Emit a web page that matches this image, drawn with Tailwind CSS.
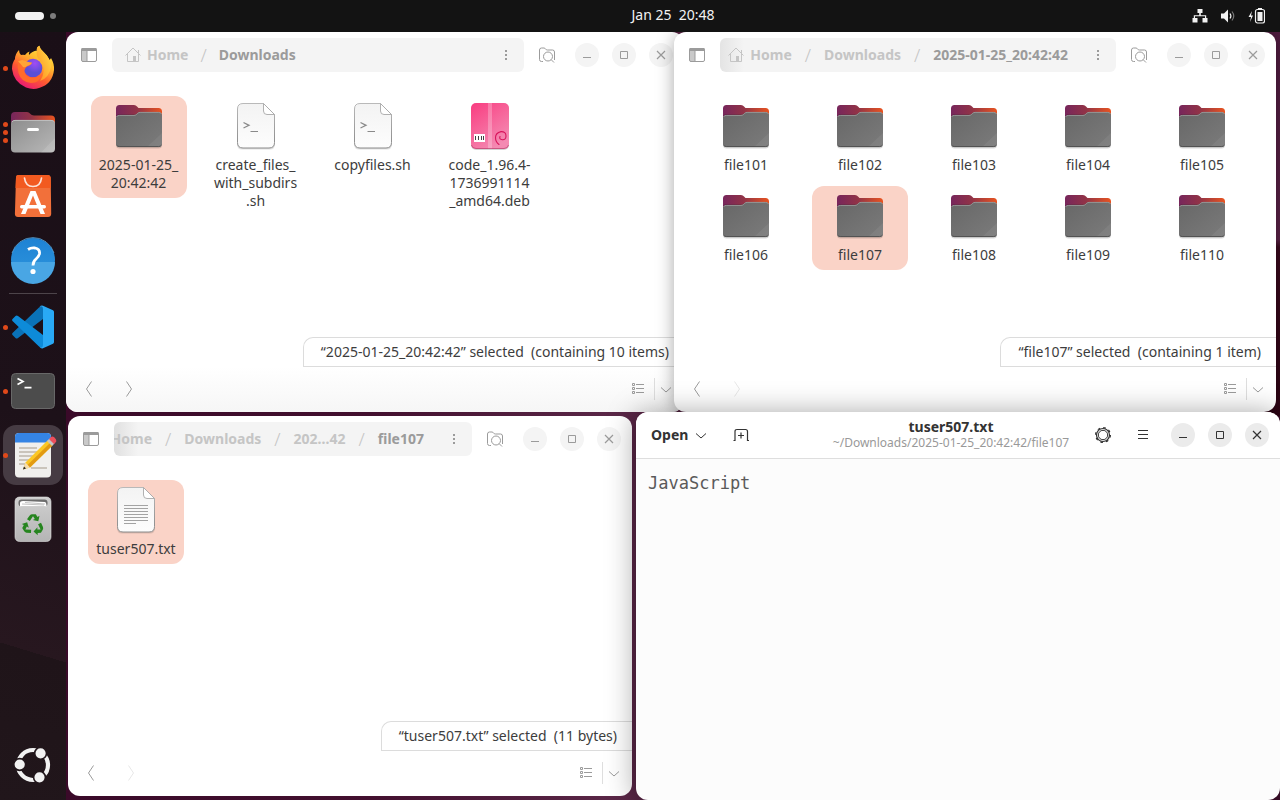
<!DOCTYPE html>
<html lang="en">
<head>
<meta charset="utf-8">
<meta name="viewport" content="width=device-width, initial-scale=1">
<title>Ubuntu Desktop</title>
<script src="https://cdn.jsdelivr.net/npm/@tailwindcss/browser@4"></script>
</head>
<body class="flex h-screen flex-col overflow-hidden bg-[#3a0a29] font-['Noto_Sans',sans-serif] text-sm leading-[18px] text-[#3d3d3d]">

<!-- Shared symbols -->
<svg width="0" height="0" class="absolute" aria-hidden="true">
  <defs>
    <linearGradient id="fold-back" x1="0" y1="0" x2="1" y2="0"><stop offset="0" stop-color="#77265c"/><stop offset=".45" stop-color="#913347"/><stop offset="1" stop-color="#e95420"/></linearGradient>
    <linearGradient id="fold-front" x1="0" y1="0" x2="1" y2="1"><stop offset="0" stop-color="#676767"/><stop offset="1" stop-color="#7b7b7b"/></linearGradient>
    <linearGradient id="paper" x1="0" y1="0" x2="0" y2="1"><stop offset="0" stop-color="#f3f3f3"/><stop offset="1" stop-color="#fdfdfd"/></linearGradient>
    <linearGradient id="paper-edge" x1="0" y1="0" x2="0" y2="1"><stop offset="0" stop-color="#b9b9b9"/><stop offset="1" stop-color="#8a8a8a"/></linearGradient>
    <linearGradient id="deb" x1="0" y1="0" x2=".6" y2="1"><stop offset="0" stop-color="#f93c80"/><stop offset="1" stop-color="#f48ab2"/></linearGradient>
  </defs>
  <symbol id="folder" viewBox="0 0 48 48">
    <path d="M1 44V6.500Q1 3 4.500 3H19q2 0 3 1.500L23.500 6H43.500Q47 6 47 9.500V20L1 30Z" fill="url(#fold-back)"/>
    <rect x="1" y="12" width="46" height="34.500" rx="3.500" fill="#000" opacity=".16"/>
    <path d="M1 16.500Q1 13 4.500 13H19q1.500 0 2.500-1l1-1Q23.500 10 25 10H43.500Q47 10 47 13.500V41.500Q47 45 43.500 45H4.500Q1 45 1 41.500Z" fill="url(#fold-front)"/>
    <path d="M1.500 15Q2 13.400 4.500 13.400H19q1.600 0 2.600-1l1-1q1-1 2.500-1H43.500Q46 10.400 46.500 12" fill="none" stroke="#a0a0a0" stroke-width=".8"/>
    <path d="M47 31V41.500Q47 45 43.500 45H32Z" fill="#fff" opacity=".06"/>
    <path d="M1.500 43Q2.500 44.600 4.500 44.600H43.500Q45.500 44.600 46.500 43" fill="none" stroke="#4c4c4c" stroke-width=".9"/>
  </symbol>
  <symbol id="page" viewBox="0 0 48 48">
    <path d="M11 2.500H32L43 13V42Q43 47.500 38 47.500H10Q5 47.500 5 42V8Z" fill="#000" opacity=".12"/>
    <path d="M11 1.500H31.500L42.500 12.500V40.500Q42.500 46 37 46H11Q5.500 46 5.500 40.500V7Q5.500 1.500 11 1.500Z" fill="url(#paper)" stroke="url(#paper-edge)" stroke-width="1"/>
    <path d="M31.500 1.500V9Q31.500 12.500 35 12.500H42.500Z" fill="#fff" stroke="#a8a8a8" stroke-width=".9" stroke-linejoin="round"/>
  </symbol>
  <symbol id="script" viewBox="0 0 48 48">
    <use href="#page" width="48" height="48"/>
    <path d="M11.500 20.500L17 23.300L11.500 26" fill="none" stroke="#8a8a8a" stroke-width="1.300"/><path d="M18.500 29.500H26" stroke="#8a8a8a"/>
  </symbol>
  <symbol id="textdoc" viewBox="0 0 48 48">
    <use href="#page" width="48" height="48"/>
    <path d="M12 19.500H36M12 22.500H36M12 25.500H36M12 28.500H36M12 31.500H36M12 34.500H36M12 37.500H24" stroke="#999" stroke-width=".9"/>
  </symbol>
  <symbol id="package" viewBox="0 0 48 48">
    <rect x="5" y="2" width="38" height="46" rx="5" fill="#000" opacity=".17"/>
    <rect x="5" y="1" width="38" height="46" rx="5" fill="url(#deb)"/>
    <path d="M22 1h4v46h-4z" fill="#fff" opacity=".25"/>
    <path d="M5.500 43Q6 46.500 10 46.500H38Q42 46.500 42.500 43" fill="none" stroke="#b9406f" stroke-width=".7"/>
    <path d="M8 32h11v8H8z" fill="#fff"/><path d="M9.500 34v4M12.500 34v4M15.500 34v4M17.500 34v4" stroke="#444" stroke-width="1"/>
    <path d="M33 42.500Q29.500 40 29.500 35.500T35 29.600Q40 29.500 40 34T35.500 37.500Q33 37 34 34.500" fill="none" stroke="#d7165c" stroke-width="1.100" stroke-linecap="round"/>
  </symbol>
  <symbol id="sidebar" viewBox="0 0 16 16">
    <path d="M1 2h5v13H1z" fill="#c9c9c9"/><rect x=".5" y="1.500" width="15" height="13" rx="1.500" fill="none" stroke="currentColor"/><path d="M.5 1h15v3H.5zM5.500 3h1v12h-1z" fill="currentColor"/>
  </symbol>
  <symbol id="home" viewBox="0 0 16 16">
    <path d="M.5 8.500L8 1L15.500 8.500M2.500 7V14.500H13.500V7M13.500 6V3" fill="none" stroke="currentColor"/><path d="M8 9h3v5.500H8z" fill="currentColor"/>
  </symbol>
  <symbol id="search" viewBox="0 0 16 16">
    <path d="M4 14.500H2.500Q.5 14.500.5 12.500V3Q.5 1 2.500 1H5Q6 1 6.500 2T8.500 3H13.500Q15.500 3 15.500 5V13" fill="none" stroke="currentColor"/><circle cx="9" cy="9.500" r="4.500" fill="none" stroke="currentColor"/><path d="M12.200 12.700L15 15.500" stroke="currentColor"/>
  </symbol>
  <symbol id="dots" viewBox="0 0 16 16"><path d="M7 3h2v2H7zM7 7h2v2H7zM7 11h2v2H7z" fill="currentColor"/></symbol>
  <symbol id="min" viewBox="0 0 24 24"><path d="M8 14h8v1H8z" fill="currentColor"/></symbol>
  <symbol id="max" viewBox="0 0 24 24"><path d="M8.500 8.500h7v7h-7z" fill="none" stroke="currentColor"/></symbol>
  <symbol id="close" viewBox="0 0 24 24"><path d="M8 8l8 8M16 8l-8 8" stroke="currentColor" stroke-width="1.200"/></symbol>
  <symbol id="prev" viewBox="0 0 16 16"><path d="M10.500.5L5.500 8L10.500 15.500" fill="none" stroke="currentColor"/></symbol>
  <symbol id="next" viewBox="0 0 16 16"><path d="M5.500.5L10.500 8L5.500 15.500" fill="none" stroke="currentColor"/></symbol>
  <symbol id="list" viewBox="0 0 16 16"><path d="M2.500 2.500h2v2h-2zM2.500 6.500h2v2h-2zM2.500 10.500h2v2h-2zM6 3.500h8M6 7.500h8M6 11.500h8" fill="none" stroke="currentColor"/></symbol>
  <symbol id="down" viewBox="0 0 12 12"><path d="M1 4.500L6 9L11 4.500" fill="none" stroke="currentColor"/></symbol>
</svg>

<!-- Top bar -->
<header class="grid h-8 shrink-0 grid-cols-[66px_1fr_auto_1fr] items-center bg-[#131313] text-[#f2f2f2]">
  <button aria-label="Activities" class="flex items-center gap-1.5 justify-self-start pl-[15px]">
    <span class="h-2 w-[29px] rounded-full bg-[#f2f2f2]"></span><span class="size-1.5 rounded-full bg-[#7d7d7d]"></span>
  </button>
  <button class="col-start-3 whitespace-pre pb-0.5">Jan 25  20:48</button>
  <button aria-label="System menu" class="flex items-center gap-3 justify-self-end pr-[15px]">
    <svg class="size-4" viewBox="0 0 16 16" fill="currentColor"><path d="M5.500 1h5v4H8.800v2.300h5.400V10H15.500v4.500h-5V10h2.500V8.300h-10V10h2.500v4.500H.5V10h1.300V7.300H7.200V5H5.500z"/></svg>
    <svg class="size-4" viewBox="0 0 16 16"><path d="M1 5.500h3L8 1.500v13L4 10.500H1z" fill="currentColor"/><path d="M10 5.500Q11.800 8 10 10.500" fill="none" stroke="currentColor" stroke-width="1.200"/><path d="M12 3.500Q15.500 8 12 12.500" fill="none" stroke="#777" stroke-width="1.200"/></svg>
    <svg class="h-4 w-[17px]" viewBox="0 0 17 16"><path d="M4 3L.5 9H3l-1 5L5 7.500H3z" fill="currentColor"/><rect x="7.500" y="1.500" width="9" height="13.500" rx="2" fill="none" stroke="currentColor" stroke-width="1.200"/><path d="M9.500 4h5v9h-5zM10 0h4v1.500h-4z" fill="currentColor"/></svg>
  </button>
</header>

<div class="flex min-h-0 flex-1">

  <!-- Dock -->
  <nav aria-label="Dock" class="flex w-[66px] shrink-0 flex-col bg-[linear-gradient(197deg,#1a0f17_0%,#1d1119_50%,#27171f_80%,#1f1419_80%,#21161b_100%)] pt-1">
    <button aria-label="Firefox" class="relative flex h-16 items-center justify-center">
      <span class="absolute left-[3px] size-[5px] rounded-full bg-[#e0491a]"></span>
      <svg class="size-12" viewBox="0 0 48 48">
        <defs><linearGradient id="ff1" x1=".85" y1="0" x2=".25" y2="1"><stop offset="0" stop-color="#fff04a"/><stop offset=".35" stop-color="#ffb92e"/><stop offset=".65" stop-color="#ff5a30"/><stop offset="1" stop-color="#e6127c"/></linearGradient><radialGradient id="ff2" cx=".6" cy=".25"><stop offset="0" stop-color="#a24bf5"/><stop offset="1" stop-color="#5a4fd6"/></radialGradient><linearGradient id="ff3" x1="1" y1="0" x2="0" y2="1"><stop offset="0" stop-color="#ffe14a"/><stop offset="1" stop-color="#ff8a1e"/></linearGradient></defs>
        <path d="M10 6Q10 9 12 11Q14 10.500 16 11Q18 8 20.500 7.500Q19.500 9.500 20 11Q23 7 28 6.500Q27 3.500 30.300 1.700Q31 5.500 35 8.500Q39 12 40.500 16Q42 14.500 42 14Q45.500 20 45 26Q43.500 40 30 44Q24 46 17 43.500Q4.500 38 3 25Q3 19 6 15Q6 10 10 6Z" fill="url(#ff1)"/>
        <path d="M30.300 1.700Q31 5.500 35 8.500Q41.500 14 42 23Q40 34 31 37Q38 27 32 18Q26 12 28 6.500Q27 3.500 30.300 1.700Z" fill="url(#ff3)"/>
        <circle cx="24" cy="24" r="9.300" fill="url(#ff2)"/>
        <path d="M9 17.500Q14 15 18 18L23 18.800Q22.500 21 18 22.500Q15 25 15.500 28Q17 33 23 33.500Q30 33.500 34 29Q31 39 22 39Q12 38 9.500 29Q8 23 9 17.500Z" fill="#ff6b2b"/>
        <path d="M9 17.500Q13 14.500 18 17.500Q20 18.500 23 18.800Q22 21 18 22Q16 24 14 23Q11 19 9 17.500Z" fill="#ffa436"/>
      </svg>
    </button>
    <button aria-label="Files" class="relative flex h-16 items-center justify-center">
      <span class="absolute left-[3px] flex flex-col gap-[3px]"><span class="size-[5px] rounded-full bg-[#e0491a]"></span><span class="size-[5px] rounded-full bg-[#e0491a]"></span><span class="size-[5px] rounded-full bg-[#e0491a]"></span></span>
      <svg class="size-12" viewBox="0 0 48 48">
        <defs><linearGradient id="fl" x1="0" y1="0" x2="1" y2="1"><stop offset="0" stop-color="#8d8d8d"/><stop offset="1" stop-color="#b8b8b8"/></linearGradient></defs>
        <path d="M2 30V8Q2 4 6 4H18q2 0 3.200 1.700T25 7.500H42Q46 7.500 46 11.500V30Z" fill="url(#fold-back)"/>
        <rect x="2" y="12" width="44" height="32.500" rx="4" fill="url(#fl)"/><path d="M3 14Q4 12.400 6 12.400H42Q44.500 12.400 45.500 14" fill="none" stroke="#c9c9c9" stroke-width=".8"/><path d="M46 30V40.500Q46 44.500 42 44.500H32Z" fill="#fff" opacity=".12"/>
        <rect x="18" y="20" width="12" height="3" rx="1.500" fill="#fff"/>
      </svg>
    </button>
    <button aria-label="App Center" class="flex h-16 items-center justify-center">
      <svg class="size-12" viewBox="0 0 48 48">
        <path d="M9 3H39Q41.500 3 41.700 5.500L42.200 42Q42 45 39 45H9Q6 45 5.900 42L7 5.500Q7 3 9 3Z" fill="#f2703a"/>
        <path d="M9 3H39Q41.500 3 41.700 5.500L41.900 16H6.500L7 5.500Q7 3 9 3Z" fill="#f25a20"/>
        <path d="M15.500 6Q16.500 14.500 24 14.500T32.500 6" fill="none" stroke="#fbe3d8" stroke-width="1.700" stroke-linecap="round"/>
        <path d="M21.500 19H26.500L36 42H31.500L24 23.500L16.500 42H12Z" fill="#fff"/><rect x="11" y="33" width="26" height="3.500" rx="1.700" fill="#fff"/>
      </svg>
    </button>
    <button aria-label="Help" class="flex h-16 items-center justify-center">
      <svg class="size-12" viewBox="0 0 48 48">
        <defs><linearGradient id="hp" x1="0" y1="0" x2="0" y2="1"><stop offset="0" stop-color="#1e82d4"/><stop offset="1" stop-color="#2f97dd"/></linearGradient></defs>
        <circle cx="24" cy="24" r="22" fill="url(#hp)"/><path d="M2 26H46A22 22 0 0 1 2 26Z" fill="#49a6e4"/><path d="M3 17A22 22 0 0 1 45 17" fill="none" stroke="#63b3ea" stroke-width=".7"/>
        <path d="M19 13.500Q22 11.500 26 12Q31 13 30.500 17.500Q30 20.500 27 23Q24 25.500 24 29.500" fill="none" stroke="#fff" stroke-width="2.800"/><circle cx="24" cy="35.500" r="2.600" fill="#fff"/>
      </svg>
    </button>
    <div class="flex h-[3px] items-center px-[9px]"><span class="h-px w-full bg-[#4d444a]"></span></div>
    <button aria-label="Visual Studio Code" class="relative flex h-16 items-center justify-center">
      <span class="absolute left-[3px] size-[5px] rounded-full bg-[#e0491a]"></span>
      <svg class="size-12" viewBox="0 0 48 48">
        <path d="M3.500 30Q2.500 31 3.500 32L6.500 35Q7.500 36 9 35L34 16V3Q31.500 3 30 4.500Z" fill="#0a72b8"/>
        <path d="M3.500 18Q2.500 17 3.500 16L6.500 13Q7.500 12 9 13L34 32V45Q31.500 45 30 43.500Z" fill="#0d8bd9"/>
        <path d="M34 2.700L44 7.300Q45 7.800 45 9V39Q45 40.200 44 40.700L34 45.300Q32 46 30.500 44Q34 45.500 34 42V6Q34 2.500 30.500 4Q32 2 34 2.700Z" fill="#29a9f5"/>
      </svg>
    </button>
    <button aria-label="Terminal" class="relative flex h-16 items-center justify-center">
      <span class="absolute left-[3px] size-[5px] rounded-full bg-[#e0491a]"></span>
      <svg class="size-12" viewBox="0 0 48 48"><rect x="2.500" y="6.500" width="43" height="35" rx="4" fill="#4c4c4c" stroke="#686868"/><path d="M8.500 11.500L14 14.500L8.500 17.500M15.500 20.700H22.500" fill="none" stroke="#fff" stroke-width="1.700"/></svg>
    </button>
    <button aria-label="Text Editor" class="relative flex h-16 items-center justify-center">
      <span class="absolute left-[3px] size-[60px] rounded-[13px] bg-[#463b43]"></span>
      <span class="absolute left-[3px] size-[5px] rounded-full bg-[#e0491a]"></span>
      <svg class="relative size-12" viewBox="0 0 48 48">
        <rect x="6" y="2" width="36" height="44.500" rx="4" fill="#f0efed"/><path d="M6 11.500V6Q6 2 10 2H38Q42 2 42 6V11.500Z" fill="#3584e4"/>
        <path d="M10 17H28M10 21H30M10 25H26M10 29H22M10 33H18M22 37H38" stroke="#bdb7ab" stroke-width="1.600"/>
        <path d="M14 38.500L16.500 31.500L38.500 9.500L43.500 14.500L21 36.500Z" fill="#fbc725"/><path d="M18.500 34L41 12L43.500 14.500L21 36.500Z" fill="#e29a12"/><path d="M14 38.500L16.500 31.500L21 36.500Z" fill="#f4dcae"/><path d="M14 38.500L15 35.500L17 37.500Z" fill="#222"/>
        <path d="M38 10L40.500 7.500L45.500 12.500L43 15Z" fill="#c4c4c4"/><path d="M40 8L42 6Q43.500 5 45.500 6.500L47 8.500Q48 10.500 46.500 11.500L45 13Z" fill="#ee4f5c"/>
      </svg>
    </button>
    <button aria-label="Trash" class="flex h-16 items-center justify-center">
      <svg class="size-12" viewBox="0 0 48 48">
        <defs><linearGradient id="tr" x1="0" y1="0" x2="0" y2="1"><stop offset="0" stop-color="#cfcfcf"/><stop offset="1" stop-color="#b5b5b5"/></linearGradient><path id="rc" d="M18 24.200L20.700 20.400Q21.700 19.200 23.200 19.200H26.800L28.500 22L30.500 20.800L29.300 26.300L23.800 25L25.800 23.900L24 21.200L20.800 26Z"/></defs>
        <rect x="6" y="2" width="36" height="44.500" rx="4.500" fill="url(#tr)" stroke="#e0e0e0" stroke-width=".6"/><rect x="9.500" y="4.500" width="29" height="7" rx="3" fill="#6d6d6d"/>
        <path d="M11 11.500V8Q11 6 14 6L36 7Q37.500 7.500 37.500 11.500Z" fill="#fff"/><path d="M13 9L35 10M16 7.500L36 9" stroke="#999" stroke-width=".6"/>
        <g fill="#26851f"><use href="#rc"/><use href="#rc" transform="rotate(120 24 30)"/><use href="#rc" transform="rotate(240 24 30)"/></g>
      </svg>
    </button>
    <button aria-label="Show Apps" class="mt-auto flex h-[71px] items-center justify-center">
      <svg class="size-12" viewBox="0 0 48 48"><circle cx="24" cy="24" r="15" fill="none" stroke="#f2f2f2" stroke-width="4.200"/><g fill="#f2f2f2" stroke="#21161b" stroke-width="1.600"><circle cx="10.700" cy="23.500" r="5.900"/><circle cx="31.600" cy="12.300" r="5.900"/><circle cx="30.500" cy="36.300" r="5.900"/></g></svg>
    </button>
  </nav>

  <!-- Desktop -->
  <main class="relative min-w-0 flex-1 overflow-hidden bg-[linear-gradient(90deg,#3a0a29_0%,#43102f_25%,#5a2747_45%,#52203f_55%,#4d1a3b_90%,#3d0e2a_100%)]">
    <div class="absolute right-0 top-0 h-1/2 w-4 bg-[linear-gradient(#4f1b3f_0%,#5a2247_54%,#3a0a1e_56%,#2f0415_100%)]"></div>

    <!-- Files: Downloads -->
    <section aria-label="Downloads" class="absolute bottom-[calc(50%+4px)] left-0 right-[calc(50%-11px)] top-0 flex flex-col overflow-hidden rounded-xl bg-white">
      <div class="flex h-[46px] shrink-0 items-center pl-1.5 pr-[11px] text-[#9b9b9b]">
        <button aria-label="Toggle sidebar" class="flex size-[34px] items-center justify-center"><svg class="size-4"><use href="#sidebar"/></svg></button>
        <div class="ml-1.5 flex h-[34px] min-w-0 flex-1 items-center rounded-md bg-[#f4f4f4] pr-2.5 font-bold">
          <div class="flex flex-1 items-center gap-3 overflow-hidden whitespace-nowrap pl-[13px]">
            <a href="#" class="flex items-center gap-1.5 text-[#c5c5c5]"><svg class="size-4 shrink-0"><use href="#home"/></svg>Home</a>
            <span class="text-lg leading-6 font-light text-[#c5c5c5]">/</span>
            <a href="#">Downloads</a>
          </div>
          <button aria-label="Folder menu"><svg class="size-4"><use href="#dots"/></svg></button>
        </div>
        <button aria-label="Search" class="ml-1.5 flex size-[34px] items-center justify-center"><svg class="size-4"><use href="#search"/></svg></button>
        <div class="ml-[11px] flex gap-[13px]">
          <button aria-label="Minimize" class="size-6 rounded-full bg-[#f4f4f4]"><svg class="size-6"><use href="#min"/></svg></button>
          <button aria-label="Maximize" class="size-6 rounded-full bg-[#f4f4f4]"><svg class="size-6"><use href="#max"/></svg></button>
          <button aria-label="Close" class="size-6 rounded-full bg-[#f4f4f4]"><svg class="size-6"><use href="#close"/></svg></button>
        </div>
      </div>
      <div class="grid flex-1 grid-cols-5 content-start items-start justify-items-center gap-y-1.5 pl-3.5 pr-[19px] pt-[18px]">
        <button class="flex w-24 flex-col items-center gap-1.5 rounded-xl bg-[#fad3c7] py-1.5"><svg class="size-12"><use href="#folder"/></svg><span>2025-01-25_<br>20:42:42</span></button>
        <button class="flex w-24 flex-col items-center gap-1.5 rounded-xl py-1.5"><svg class="size-12"><use href="#script"/></svg><span>create_files_<br>with_subdirs<br>.sh</span></button>
        <button class="flex w-24 flex-col items-center gap-1.5 rounded-xl py-1.5"><svg class="size-12"><use href="#script"/></svg><span>copyfiles.sh</span></button>
        <button class="flex w-24 flex-col items-center gap-1.5 rounded-xl py-1.5"><svg class="size-12"><use href="#package"/></svg><span>code_1.96.4-<br>1736991114<br>_amd64.deb</span></button>
      </div>
      <p class="flex h-[30px] shrink-0 items-center self-end whitespace-pre rounded-tl-[10px] border-y border-l border-[#dcdcdc] pl-[17px] pr-[15px]">“2025-01-25_20:42:42” selected  (containing 10 items)</p>
      <div class="flex h-[45px] shrink-0 items-center bg-linear-to-b from-white to-[#f6f6f6] pb-0.5 pl-1.5 pr-3 text-[#9b9b9b]">
        <button aria-label="Back" class="flex size-[34px] items-center justify-center"><svg class="size-4"><use href="#prev"/></svg></button>
        <button aria-label="Forward" class="ml-1.5 flex size-[34px] items-center justify-center"><svg class="size-4"><use href="#next"/></svg></button>
        <button aria-label="List view" class="ml-auto"><svg class="size-4"><use href="#list"/></svg></button>
        <span class="ml-2 mr-[5px] h-[22px] w-px bg-[#dedede]"></span>
        <button aria-label="View options"><svg class="size-3"><use href="#down"/></svg></button>
      </div>
    </section>

    <!-- Files: 2025-01-25_20:42:42 -->
    <section aria-label="2025-01-25_20:42:42" class="absolute bottom-[calc(50%+4px)] left-[calc(50%+1px)] right-1 top-0 flex flex-col overflow-hidden rounded-xl bg-white shadow-[0_2px_18px_rgba(0,0,0,0.35)]">
      <div class="flex h-[46px] shrink-0 items-center pl-1.5 pr-[11px] text-[#9b9b9b]">
        <button aria-label="Toggle sidebar" class="flex size-[34px] items-center justify-center"><svg class="size-4"><use href="#sidebar"/></svg></button>
        <div class="ml-1.5 flex h-[34px] min-w-0 flex-1 items-center rounded-md bg-[linear-gradient(90deg,#e4e4e4,#f4f4f4_24px)] pr-2.5 font-bold">
          <div class="flex min-w-0 flex-1 items-center justify-end gap-[13px] overflow-hidden whitespace-nowrap pr-[22px]">
            <a href="#" class="flex items-center gap-1.5 text-[#c5c5c5]"><svg class="size-4 shrink-0"><use href="#home"/></svg>Home</a>
            <span class="text-lg leading-6 font-light text-[#c5c5c5]">/</span>
            <a href="#" class="text-[#c5c5c5]">Downloads</a>
            <span class="text-lg leading-6 font-light text-[#c5c5c5]">/</span>
            <a href="#">2025-01-25_20:42:42</a>
          </div>
          <button aria-label="Folder menu"><svg class="size-4"><use href="#dots"/></svg></button>
        </div>
        <button aria-label="Search" class="ml-1.5 flex size-[34px] items-center justify-center"><svg class="size-4"><use href="#search"/></svg></button>
        <div class="ml-[11px] flex gap-[13px]">
          <button aria-label="Minimize" class="size-6 rounded-full bg-[#f4f4f4]"><svg class="size-6"><use href="#min"/></svg></button>
          <button aria-label="Maximize" class="size-6 rounded-full bg-[#f4f4f4]"><svg class="size-6"><use href="#max"/></svg></button>
          <button aria-label="Close" class="size-6 rounded-full bg-[#f4f4f4]"><svg class="size-6"><use href="#close"/></svg></button>
        </div>
      </div>
      <div class="grid flex-1 grid-cols-5 content-start items-start justify-items-center gap-y-1.5 pl-[15px] pr-[17px] pt-[18px]">
        <button class="flex w-24 flex-col items-center gap-1.5 rounded-xl py-1.5"><svg class="size-12"><use href="#folder"/></svg><span>file101</span></button>
        <button class="flex w-24 flex-col items-center gap-1.5 rounded-xl py-1.5"><svg class="size-12"><use href="#folder"/></svg><span>file102</span></button>
        <button class="flex w-24 flex-col items-center gap-1.5 rounded-xl py-1.5"><svg class="size-12"><use href="#folder"/></svg><span>file103</span></button>
        <button class="flex w-24 flex-col items-center gap-1.5 rounded-xl py-1.5"><svg class="size-12"><use href="#folder"/></svg><span>file104</span></button>
        <button class="flex w-24 flex-col items-center gap-1.5 rounded-xl py-1.5"><svg class="size-12"><use href="#folder"/></svg><span>file105</span></button>
        <button class="flex w-24 flex-col items-center gap-1.5 rounded-xl py-1.5"><svg class="size-12"><use href="#folder"/></svg><span>file106</span></button>
        <button class="flex w-24 flex-col items-center gap-1.5 rounded-xl bg-[#fad3c7] py-1.5"><svg class="size-12"><use href="#folder"/></svg><span>file107</span></button>
        <button class="flex w-24 flex-col items-center gap-1.5 rounded-xl py-1.5"><svg class="size-12"><use href="#folder"/></svg><span>file108</span></button>
        <button class="flex w-24 flex-col items-center gap-1.5 rounded-xl py-1.5"><svg class="size-12"><use href="#folder"/></svg><span>file109</span></button>
        <button class="flex w-24 flex-col items-center gap-1.5 rounded-xl py-1.5"><svg class="size-12"><use href="#folder"/></svg><span>file110</span></button>
      </div>
      <p class="flex h-[30px] shrink-0 items-center self-end whitespace-pre rounded-tl-[10px] border-y border-l border-[#dcdcdc] pl-[17px] pr-[15px]">“file107” selected  (containing 1 item)</p>
      <div class="flex h-[45px] shrink-0 items-center pb-0.5 pl-1.5 pr-3 text-[#9b9b9b]">
        <button aria-label="Back" class="flex size-[34px] items-center justify-center"><svg class="size-4"><use href="#prev"/></svg></button>
        <button aria-label="Forward" disabled class="ml-1.5 flex size-[34px] items-center justify-center text-[#e8e8e8]"><svg class="size-4"><use href="#next"/></svg></button>
        <button aria-label="List view" class="ml-auto"><svg class="size-4"><use href="#list"/></svg></button>
        <span class="ml-2 mr-[5px] h-[22px] w-px bg-[#dedede]"></span>
        <button aria-label="View options"><svg class="size-3"><use href="#down"/></svg></button>
      </div>
    </section>

    <!-- Files: file107 -->
    <section aria-label="file107" class="absolute bottom-1 left-0.5 right-[calc(50%+41px)] top-1/2 flex flex-col overflow-hidden rounded-xl bg-white">
      <div class="flex h-[46px] shrink-0 items-center pl-1.5 pr-[11px] text-[#9b9b9b]">
        <button aria-label="Toggle sidebar" class="flex size-[34px] items-center justify-center"><svg class="size-4"><use href="#sidebar"/></svg></button>
        <div class="ml-1.5 flex h-[34px] min-w-0 flex-1 items-center rounded-md bg-[linear-gradient(90deg,#e0e0e0,#f4f4f4_24px)] pr-2.5 font-bold">
          <div class="flex min-w-0 flex-1 items-center justify-end gap-[13px] overflow-hidden whitespace-nowrap pr-[22px]">
            <a href="#" class="text-[#c5c5c5]">Home</a>
            <span class="text-lg leading-6 font-light text-[#c5c5c5]">/</span>
            <a href="#" class="text-[#c5c5c5]">Downloads</a>
            <span class="text-lg leading-6 font-light text-[#c5c5c5]">/</span>
            <a href="#" class="text-[#c5c5c5]">202…42</a>
            <span class="text-lg leading-6 font-light text-[#c5c5c5]">/</span>
            <a href="#">file107</a>
          </div>
          <button aria-label="Folder menu"><svg class="size-4"><use href="#dots"/></svg></button>
        </div>
        <button aria-label="Search" class="ml-1.5 flex size-[34px] items-center justify-center"><svg class="size-4"><use href="#search"/></svg></button>
        <div class="ml-[11px] flex gap-[13px]">
          <button aria-label="Minimize" class="size-6 rounded-full bg-[#f4f4f4]"><svg class="size-6"><use href="#min"/></svg></button>
          <button aria-label="Maximize" class="size-6 rounded-full bg-[#f4f4f4]"><svg class="size-6"><use href="#max"/></svg></button>
          <button aria-label="Close" class="size-6 rounded-full bg-[#f4f4f4]"><svg class="size-6"><use href="#close"/></svg></button>
        </div>
      </div>
      <div class="flex flex-1 items-start pl-5 pt-[18px]">
        <button class="flex w-24 flex-col items-center gap-1.5 rounded-xl bg-[#fad3c7] py-1.5"><svg class="size-12"><use href="#textdoc"/></svg><span>tuser507.txt</span></button>
      </div>
      <p class="flex h-[30px] shrink-0 items-center self-end whitespace-pre rounded-tl-[10px] border-y border-l border-[#dcdcdc] pl-[17px] pr-[15px]">“tuser507.txt” selected  (11 bytes)</p>
      <div class="flex h-[45px] shrink-0 items-center pb-0.5 pl-1.5 pr-3 text-[#9b9b9b]">
        <button aria-label="Back" class="flex size-[34px] items-center justify-center"><svg class="size-4"><use href="#prev"/></svg></button>
        <button aria-label="Forward" disabled class="ml-1.5 flex size-[34px] items-center justify-center text-[#e8e8e8]"><svg class="size-4"><use href="#next"/></svg></button>
        <button aria-label="List view" class="ml-auto"><svg class="size-4"><use href="#list"/></svg></button>
        <span class="ml-2 mr-[5px] h-[22px] w-px bg-[#dedede]"></span>
        <button aria-label="View options"><svg class="size-3"><use href="#down"/></svg></button>
      </div>
    </section>

    <!-- Text editor -->
    <section aria-label="Text Editor" class="absolute bottom-0 left-[calc(50%-37px)] right-0 top-[calc(50%-4px)] flex flex-col overflow-hidden rounded-xl bg-[#fcfcfc] shadow-[0_2px_30px_rgba(0,0,0,0.38)]">
      <div class="grid h-[47px] shrink-0 grid-cols-[1fr_auto_1fr] items-center border-b border-[#dedede] bg-white pl-[15px] pr-[11px] text-[#333]">
        <div class="flex items-center">
          <button class="flex items-center gap-[7px] font-bold">Open<svg class="size-3"><use href="#down"/></svg></button>
          <button aria-label="New tab" class="ml-[26px]"><svg class="size-4" viewBox="0 0 16 16"><path d="M.5 13.500H2V4.500Q2 2.500 4 2.500H12.500Q14.500 2.500 14.500 4.500V13.500H16M8 5.500v6M5 8.500h6" fill="none" stroke="currentColor" stroke-width="1.200"/></svg></button>
        </div>
        <div class="mr-[18px] text-center">
          <h1 class="leading-4 font-bold">tuser507.txt</h1>
          <p class="text-xs leading-4 text-[#999]">~/Downloads/2025-01-25_20:42:42/file107</p>
        </div>
        <div class="flex items-center justify-end">
          <button aria-label="Settings"><svg class="size-4" viewBox="0 0 16 16" fill="none" stroke="currentColor"><circle cx="8" cy="8" r="4.700"/><circle cx="8" cy="8" r="6.500" stroke-width="1.200"/><circle cx="8" cy="8" r="7.400" stroke-width="1.200" stroke-dasharray="2.600 3.211"/></svg></button>
          <button aria-label="Main menu" class="ml-6 mr-5"><svg class="size-4" viewBox="0 0 16 16"><path d="M3 3.500h10M3 7.500h10M3 11.500h10" stroke="currentColor"/></svg></button>
          <div class="flex gap-[13px]">
            <button aria-label="Minimize" class="size-6 rounded-full bg-[#ebebeb]"><svg class="size-6"><use href="#min"/></svg></button>
            <button aria-label="Maximize" class="size-6 rounded-full bg-[#ebebeb]"><svg class="size-6"><use href="#max"/></svg></button>
            <button aria-label="Close" class="size-6 rounded-full bg-[#ebebeb]"><svg class="size-6"><use href="#close"/></svg></button>
          </div>
        </div>
      </div>
      <textarea aria-label="Document text" spellcheck="false" class="flex-1 resize-none px-3 pt-3 font-['DejaVu_Sans_Mono',monospace] text-[17px] leading-6 text-[#5a5a5a] outline-none">JavaScript</textarea>
    </section>
  </main>
</div>
</body>
</html>
